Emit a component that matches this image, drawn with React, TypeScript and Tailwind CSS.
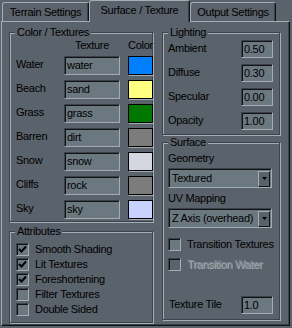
import React from 'react';

const rows = [
  { label: 'Water', tex: 'water', color: 'bg-[#0080ff]' },
  { label: 'Beach', tex: 'sand', color: 'bg-[#ffff80]' },
  { label: 'Grass', tex: 'grass', color: 'bg-[#007800]' },
  { label: 'Barren', tex: 'dirt', color: 'bg-[#7c7c7c]' },
  { label: 'Snow', tex: 'snow', color: 'bg-[#d6d6e2]' },
  { label: 'Cliffs', tex: 'rock', color: 'bg-[#7c7c7c]' },
  { label: 'Sky', tex: 'sky', color: 'bg-[#c8d2ff]' },
];

const attributes = [
  { label: 'Smooth Shading', checked: true },
  { label: 'Lit Textures', checked: true },
  { label: 'Foreshortening', checked: true },
  { label: 'Filter Textures', checked: false },
  { label: 'Double Sided', checked: false },
];

const lighting = [
  { label: 'Ambient', value: '0.50' },
  { label: 'Diffuse', value: '0.30' },
  { label: 'Specular', value: '0.00' },
  { label: 'Opacity', value: '1.00' },
];

const Group: React.FC<{ title: string; className?: string; children: React.ReactNode }> = ({ title, className, children }) => (
  <div
    className={`flex flex-col border border-[#3d444b] shadow-[inset_1px_1px_0_#a4acb4,1px_1px_0_#a4acb4] ${className ?? ''}`}
  >
    <span className="-mt-[7px] ml-[5px] px-[2px] self-start bg-[#5a626b] h-[13px]">{title}</span>
    {children}
  </div>
);

const Field: React.FC<{ value: string; className?: string }> = ({ value, className }) => (
  <div
    className={`flex items-center px-[2px] bg-[#6b7880] border border-t-[#3b4148] border-l-[#3b4148] border-r-[#a4acb4] border-b-[#a4acb4] shadow-[inset_1px_1px_0_#101214] ${className ?? ''}`}
  >
    {value}
  </div>
);

const Check: React.FC<{ label: string; checked?: boolean; disabled?: boolean }> = ({ label, checked, disabled }) => (
  <div className="flex items-center gap-[6px] h-[15px] whitespace-nowrap">
    <div
      className={`w-[13px] h-[13px] shrink-0 flex items-center justify-center border border-t-[#3b4148] border-l-[#3b4148] border-r-[#a4acb4] border-b-[#a4acb4] shadow-[inset_1px_1px_0_#101214] ${
        disabled ? 'bg-[#5a626b]' : 'bg-[#6b7880]'
      }`}
    >
      {checked && (
        <svg width="9" height="9" viewBox="0 0 9 9">
          <path d="M1 4 L3.5 6.5 L8 1.5" fill="none" stroke="#000" strokeWidth="2" />
        </svg>
      )}
    </div>
    <span className={disabled ? 'text-[#858d95] [text-shadow:1px_1px_0_#a9b1b9]' : 'text-black'}>{label}</span>
  </div>
);

const Select: React.FC<{ value: string }> = ({ value }) => (
  <div className="flex items-center justify-between w-[104px] h-[20px] pl-[3px] pr-px bg-[#6b7880] border border-t-[#3b4148] border-l-[#3b4148] border-r-[#a4acb4] border-b-[#a4acb4] shadow-[inset_1px_1px_0_#101214]">
    <span className="whitespace-nowrap">{value}</span>
    <div className="w-[12px] h-[16px] mt-px shrink-0 flex items-center justify-center bg-[#5a626b] border border-t-[#a4acb4] border-l-[#a4acb4] border-r-[#101214] border-b-[#101214]">
      <svg width="5" height="3" viewBox="0 0 5 3">
        <path d="M0 0 H5 L2.5 3 Z" fill="#000" />
      </svg>
    </div>
  </div>
);

const Tab: React.FC<{ label: string; active?: boolean; className?: string }> = ({ label, active, className }) => (
  <div
    className={`flex items-center justify-center rounded-t-[3px] border-t border-l border-r border-t-[#a4acb4] border-l-[#a4acb4] border-r-[#101214] shadow-[inset_-1px_0_0_#3b4148] bg-[#5a626b] whitespace-nowrap ${
      active ? 'relative z-10 h-[22px] -mb-px pb-[2px]' : 'h-[19px]'
    } ${className ?? ''}`}
  >
    {label}
  </div>
);

export default function App() {
  return (
    <div className="w-[292px] h-[328px] bg-[#5a626b] pl-px font-['Liberation_Sans',Arial,sans-serif] text-[11px] leading-[13px] tracking-[-0.3px] text-black overflow-hidden">
      <div className="flex items-end h-[21px]">
        <Tab label="Terrain Settings" className="ml-px w-[87px]" />
        <Tab label="Surface / Texture" active className="w-[101px]" />
        <Tab label="Output Settings" className="w-[86px]" />
      </div>

      <div className="w-[289px] h-[305px] flex gap-[9px] pl-[7px] pt-[10px] border border-t-[#a4acb4] border-l-[#a4acb4] border-r-[#101214] border-b-[#101214] shadow-[inset_-1px_-1px_0_#3b4148]">
        <div className="flex flex-col gap-[9px] w-[144px] shrink-0">
          <Group title="Color / Textures" className="h-[190px]">
            <div className="grid grid-cols-[40px_56px_25px] gap-x-[8px] pl-[6px]">
              <span />
              <span className="text-center">Texture</span>
              <span className="text-center">Color</span>
            </div>
            <div className="grid grid-cols-[40px_56px_25px] gap-x-[8px] gap-y-[5px] pl-[6px] mt-[4px]">
              {rows.map((r) => (
                <React.Fragment key={r.label}>
                  <span className="h-[19px] pt-[2px]">{r.label}</span>
                  <Field value={r.tex} className="h-[19px]" />
                  <div className={`h-[19px] border border-black shadow-[1px_1px_0_#a4acb4] ${r.color}`} />
                </React.Fragment>
              ))}
            </div>
          </Group>

          <Group title="Attributes" className="h-[92px]">
            <div className="flex flex-col pl-[6px] mt-[4px]">
              {attributes.map((a) => (
                <Check key={a.label} label={a.label} checked={a.checked} />
              ))}
            </div>
          </Group>
        </div>

        <div className="flex flex-col gap-[7px] w-[118px] shrink-0">
          <Group title="Lighting" className="h-[103px]">
            <div className="flex flex-col gap-[6px] mt-px pl-[5px] pr-[6px]">
              {lighting.map((l) => (
                <div key={l.label} className="flex justify-between h-[18px]">
                  <span className="pt-[2px]">{l.label}</span>
                  <Field value={l.value} className="w-[32px] h-[18px]" />
                </div>
              ))}
            </div>
          </Group>

          <Group title="Surface" className="h-[178px]">
            <div className="flex flex-col flex-1 pl-[5px] pr-[6px]">
              <span className="mt-[3px]">Geometry</span>
              <div className="mt-[3px]">
                <Select value="Textured" />
              </div>
              <span className="mt-[4px]">UV Mapping</span>
              <div className="mt-[3px]">
                <Select value="Z Axis (overhead)" />
              </div>
              <div className="mt-[9px]">
                <Check label="Transition Textures" />
              </div>
              <div className="mt-[5px]">
                <Check label="Transition Water" disabled />
              </div>
              <div className="flex-1" />
              <div className="flex justify-between h-[18px] mb-[5px]">
                <span className="pt-[2px] pl-px">Texture Tile</span>
                <Field value="1.0" className="w-[32px] h-[18px]" />
              </div>
            </div>
          </Group>
        </div>
      </div>
    </div>
  );
}
